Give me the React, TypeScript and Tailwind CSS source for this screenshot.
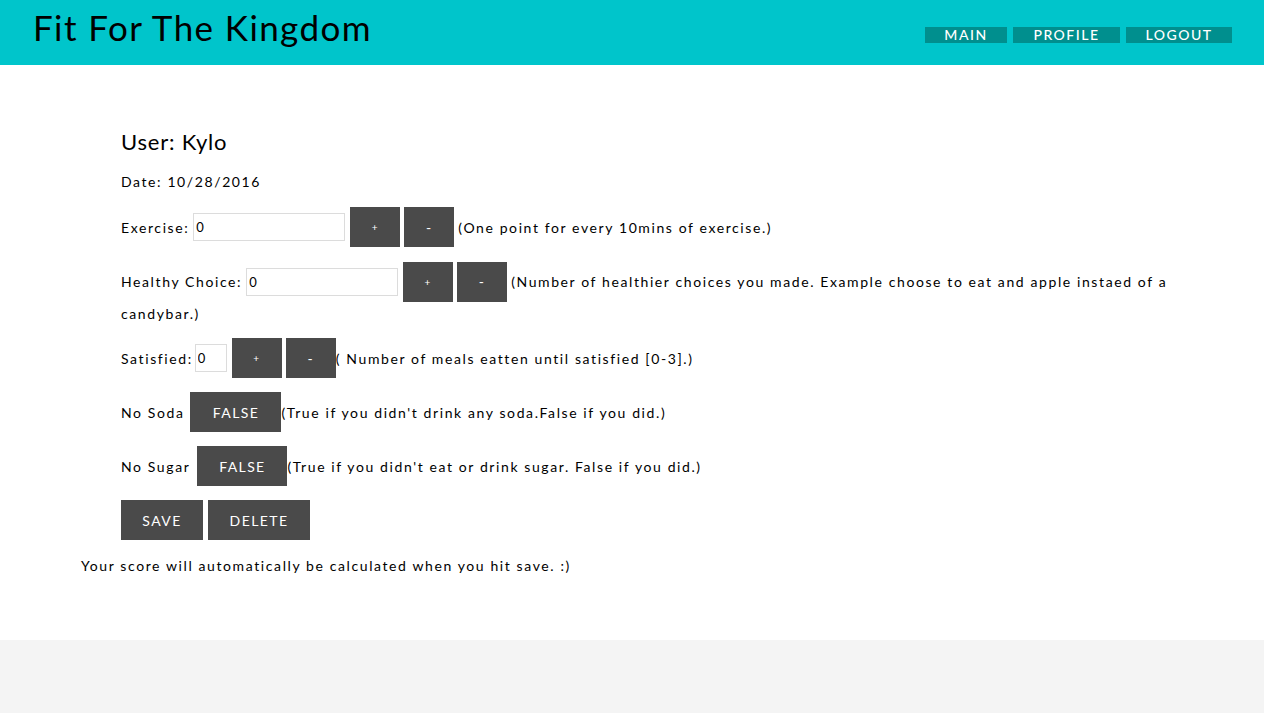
import React from "react";

const font = { fontFamily: "Lato, 'Liberation Sans', sans-serif" };

function Btn({ children, className = "" }: { children: React.ReactNode; className?: string }) {
  return (
    <button
      className={`bg-[#4a4a4a] text-white h-[40px] flex items-center justify-center shrink-0 tracking-[1.4px] ${className}`}
    >
      {children}
    </button>
  );
}

export default function App() {
  return (
    <div className="min-h-[713px] bg-[#f4f4f4] text-black" style={font}>
      <header className="h-[65px] bg-[#00c5cb] flex justify-between">
        <h1 className="pl-[33px] pt-[6px] text-[35px] leading-[42px] tracking-[1.4px] text-black">
          Fit For The Kingdom
        </h1>
        <nav className="flex gap-[6px] pt-[27px] pr-[32px]">
          <a className="w-[82px] h-[16px] bg-[#008f8e] text-white text-[14px] font-medium leading-[16px] text-center tracking-[1.5px]">MAIN</a>
          <a className="w-[107px] h-[16px] bg-[#008f8e] text-white text-[14px] font-medium leading-[16px] text-center tracking-[1.5px]">PROFILE</a>
          <a className="w-[106px] h-[16px] bg-[#008f8e] text-white text-[14px] font-medium leading-[16px] text-center tracking-[1.5px]">LOGOUT</a>
        </nav>
      </header>
      <main className="bg-white h-[575px] pt-[63px] text-[14px] tracking-[1.6px]">
        <div className="pl-[121px] pr-[80px]">
          <h2 className="text-[22px] leading-[28px] tracking-[0.8px]">User: Kylo</h2>
          <p className="mt-[14px] leading-[24px]">Date: 10/28/2016</p>
          <div className="mt-[13px] flex items-center h-[40px]">
            <span>Exercise:</span>
            <input readOnly value="0" className="ml-[4px] w-[152px] h-[28px] border border-[#dcdcdc] px-[2px] text-[13px]" />
            <Btn className="ml-[5px] w-[50px] text-[10px]">+</Btn>
            <Btn className="ml-[4px] w-[50px] text-[14px]">-</Btn>
            <span className="ml-[4px]">(One point for every 10mins of exercise.)</span>
          </div>
          <div className="mt-[15px] leading-[24px]">
            <div className="flex items-center h-[40px]">
              <span>Healthy Choice:</span>
              <input readOnly value="0" className="ml-[4px] w-[152px] h-[28px] border border-[#dcdcdc] px-[2px] text-[13px]" />
              <Btn className="ml-[5px] w-[50px] text-[10px]">+</Btn>
              <Btn className="ml-[4px] w-[50px] text-[14px]">-</Btn>
              <span className="ml-[4px] whitespace-nowrap">(Number of healthier choices you made. Example choose to eat and apple instaed of a</span>
            </div>
            <div className="h-[24px] leading-[24px]">candybar.)</div>
          </div>
          <div className="mt-[12px] flex items-center h-[40px]">
            <span>Satisfied:</span>
            <input readOnly value="0" className="ml-[2px] w-[32px] h-[28px] border border-[#dcdcdc] px-[2px] text-[13px]" />
            <Btn className="ml-[5px] w-[50px] text-[10px]">+</Btn>
            <Btn className="ml-[4px] w-[50px] text-[14px]">-</Btn>
            <span>( Number of meals eatten until satisfied [0-3].)</span>
          </div>
          <div className="mt-[14px] flex items-center h-[40px]">
            <span>No Soda</span>
            <Btn className="ml-[6px] w-[91px] text-[14px]">FALSE</Btn>
            <span>(True if you didn't drink any soda.False if you did.)</span>
          </div>
          <div className="mt-[14px] flex items-center h-[40px]">
            <span>No Sugar</span>
            <Btn className="ml-[7px] w-[90px] text-[14px]">FALSE</Btn>
            <span>(True if you didn't eat or drink sugar. False if you did.)</span>
          </div>
          <div className="mt-[14px] flex items-center h-[40px]">
            <Btn className="w-[82px] text-[14px]">SAVE</Btn>
            <Btn className="ml-[5px] w-[102px] text-[14px]">DELETE</Btn>
          </div>
        </div>
        <p className="pl-[81px] mt-[14px] leading-[24px]">Your score will automatically be calculated when you hit save. :)</p>
      </main>
    </div>
  );
}
